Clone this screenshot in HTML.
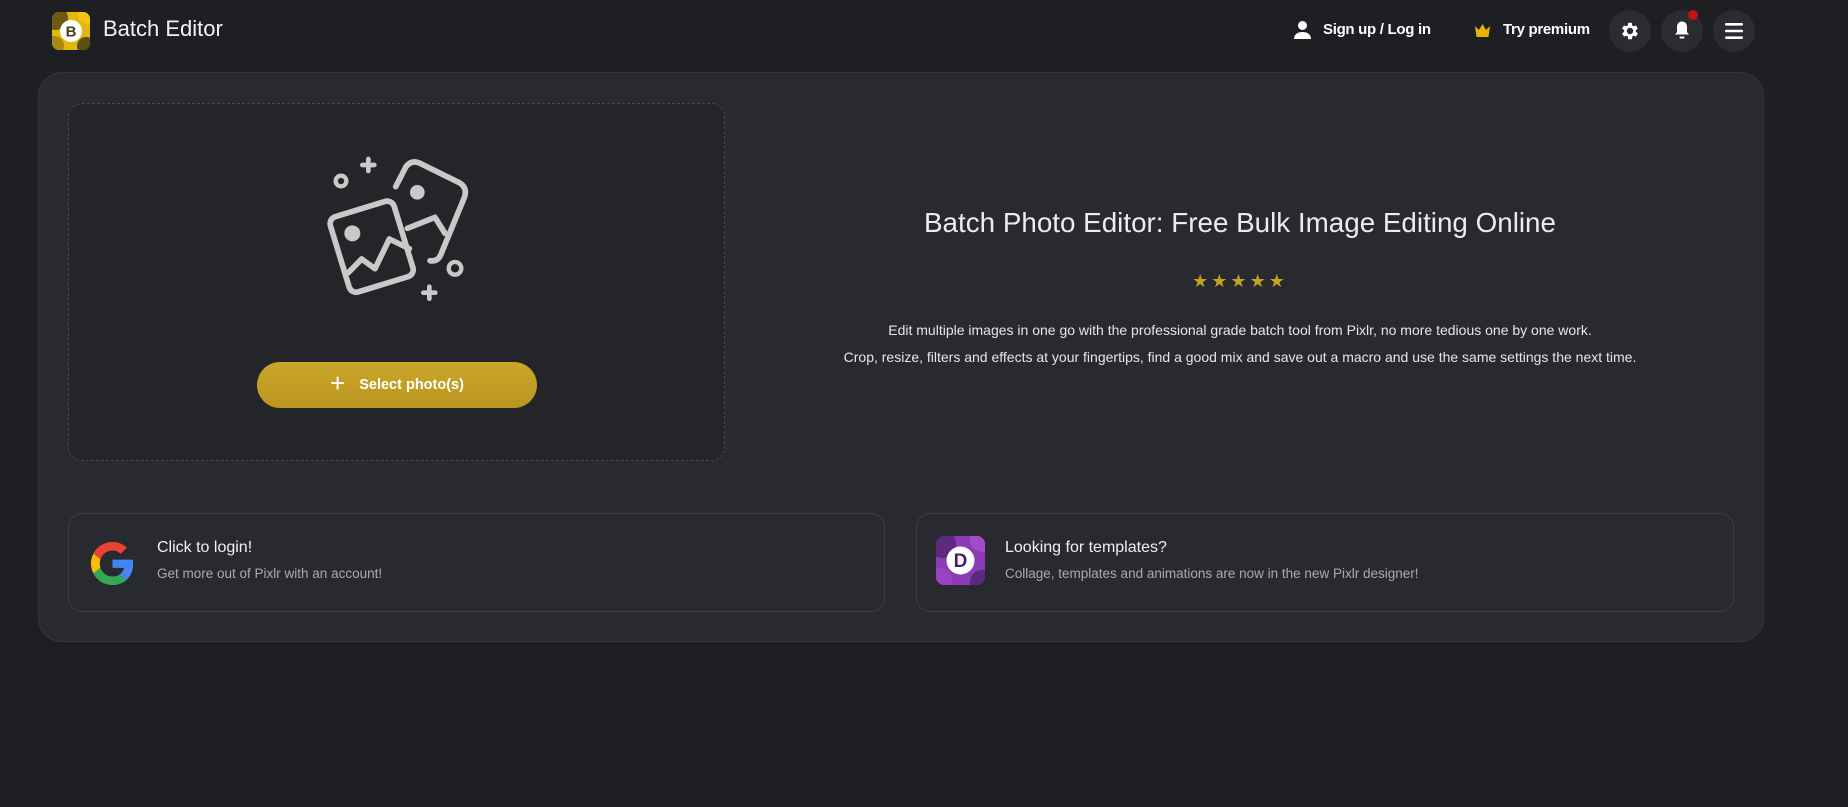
<!DOCTYPE html>
<html><head><meta charset="utf-8">
<style>
*{box-sizing:border-box;margin:0;padding:0}
html,body{width:1848px;height:807px;background:#1d1f22;overflow:hidden;font-family:"Liberation Sans",sans-serif;color:#e8e8e8}
.abs{position:absolute}
.hdr-t{left:103px;top:16px;font-size:22px;color:#f2f2f2}
.nav{top:21px;font-size:15px;font-weight:bold;color:#fff;letter-spacing:-0.3px}
.circ{width:42px;height:42px;border-radius:50%;background:#2a2c30;top:10px}
.card{left:38px;top:72px;width:1726px;height:570px;background:#282a2f;border:1px solid #33363b;border-radius:24px}
.drop{left:68px;top:103px;width:657px;height:358px;background:#232529;border:1.5px dashed #45484e;border-radius:14px}
.btn{left:257px;top:362px;width:280px;height:46px;border-radius:23px;background:linear-gradient(180deg,#c9a62b,#bb961f);color:#fff;font-weight:bold;font-size:14.5px;display:flex;align-items:center;justify-content:center}
.title{left:840px;width:800px;top:207px;text-align:center;font-size:27.8px;color:#ececec}
.stars{left:880px;width:720px;top:271px;text-align:center;font-size:18px;color:#c9a020;letter-spacing:3px}
.p{left:780px;width:920px;text-align:center;font-size:14px;color:#e6e6e6}
.bc{top:513px;height:99px;border:1px solid #3b3e44;border-radius:14px;background:#282a2f}
.bt{font-size:16px;color:#f0f0f0}
.bs{font-size:13.5px;color:#a9abaf}
</style></head><body>
<svg class="abs" style="left:52px;top:12px" width="38" height="38" viewBox="0 0 38 38">
<defs><clipPath id="lc"><rect width="38" height="38" rx="7"/></clipPath></defs>
<g clip-path="url(#lc)"><rect width="38" height="38" fill="#e3b80e"/>
<circle cx="4" cy="6" r="12" fill="#6b5a14"/><circle cx="36" cy="2" r="10" fill="#f0c516"/>
<circle cx="2" cy="34" r="10" fill="#a88a10"/><circle cx="34" cy="34" r="9" fill="#5e4e12"/></g>
<circle cx="19" cy="19" r="11" fill="#fff"/>
<text x="19" y="24.5" text-anchor="middle" font-family="Liberation Sans" font-weight="bold" font-size="15" fill="#4a3f10">B</text>
</svg>
<div class="abs hdr-t">Batch Editor</div>

<svg class="abs" style="left:1293px;top:20px" width="19" height="20" viewBox="0 0 19 20"><circle cx="9.5" cy="5.5" r="4.5" fill="#fff"/><path d="M1 19c0-5 4-7 8.5-7s8.5 2 8.5 7z" fill="#fff"/></svg>
<div class="abs nav" style="left:1323px">Sign up / Log in</div>
<svg class="abs" style="left:1474px;top:23px" width="17" height="15" viewBox="0 0 17 15"><path d="M1 3l4 4 3.5-6 3.5 6 4-4-1.5 11h-12z" fill="#e8b400"/></svg>
<div class="abs nav" style="left:1503px">Try premium</div>
<div class="abs circ" style="left:1609px"></div>
<svg class="abs" style="left:1619px;top:20px" width="22" height="22" viewBox="0 0 24 24"><path fill="#fff" d="M19.4 13a7.5 7.5 0 000-2l2.1-1.6-2-3.5-2.5 1a7 7 0 00-1.7-1L15 3h-4l-.4 2.9a7 7 0 00-1.7 1l-2.5-1-2 3.5L6.6 11a7.5 7.5 0 000 2l-2.2 1.6 2 3.5 2.5-1a7 7 0 001.7 1L11 21h4l.4-2.9a7 7 0 001.7-1l2.5 1 2-3.5zM13 15.5a3.5 3.5 0 110-7 3.5 3.5 0 010 7z" transform="translate(-1 0)"/></svg>
<div class="abs circ" style="left:1661px"></div>
<svg class="abs" style="left:1672px;top:20px" width="20" height="20" viewBox="0 0 20 20"><path d="M10 1.5c-3.3 0-5 2.5-5 5.5v5l-2 2.5h14l-2-2.5V7c0-3-1.7-5.5-5-5.5z" fill="#fff"/><rect x="7.5" y="16.5" width="5" height="2" rx="1" fill="#fff"/></svg>
<div class="abs" style="left:1688px;top:10px;width:10px;height:10px;border-radius:50%;background:#c01515"></div>
<div class="abs circ" style="left:1713px"></div>
<svg class="abs" style="left:1724px;top:21px" width="20" height="20" viewBox="0 0 20 20"><rect x="1" y="2" width="18" height="2.6" rx="1.2" fill="#fff"/><rect x="1" y="8.7" width="18" height="2.6" rx="1.2" fill="#fff"/><rect x="1" y="15.4" width="18" height="2.6" rx="1.2" fill="#fff"/></svg>

<div class="abs card"></div>
<div class="abs drop"></div>
<svg class="abs" style="left:300px;top:140px" width="200" height="170" viewBox="0 0 600 510" fill="none" stroke="#c9c9c9" stroke-width="17" stroke-linecap="round" stroke-linejoin="round">
<path d="M287,140 L318,80 Q335,58 360,70 L478,128 Q502,142 494,170 L422,345 Q412,366 390,362"/>
<path d="M322,265 L405,232 L435,280"/>
<circle cx="352" cy="157" r="22" fill="#c9c9c9" stroke="none"/>
<g transform="rotate(-17 215 320)"><rect x="115" y="202" width="200" height="236" rx="22"/></g>
<path d="M145,398 L185,357 L225,386 L268,297 L328,326"/>
<circle cx="157" cy="280" r="24" fill="#c9c9c9" stroke="none"/>
<circle cx="123" cy="123" r="16" stroke-width="13"/>
<circle cx="465" cy="385" r="19" stroke-width="13"/>
<path d="M205,57V93M187,75H223" stroke-width="14"/>
<path d="M388,440V476M370,458H406" stroke-width="14"/>
</svg>
<div class="abs btn"><span style="font-size:26px;font-weight:normal;margin-right:14px;margin-top:-3px">+</span>Select photo(s)</div>

<div class="abs title">Batch Photo Editor: Free Bulk Image Editing Online</div>
<div class="abs stars">★★★★★</div>
<div class="abs p" style="top:322px">Edit multiple images in one go with the professional grade batch tool from Pixlr, no more tedious one by one work.</div>
<div class="abs p" style="top:349px">Crop, resize, filters and effects at your fingertips, find a good mix and save out a macro and use the same settings the next time.</div>

<div class="abs bc" style="left:68px;width:817px"></div>
<svg class="abs" style="left:89px;top:540px" width="47" height="47" viewBox="0 0 48 48">
<path fill="#4285F4" d="M45.1 24.5c0-1.6-.1-3.1-.4-4.5H24v8.5h11.8c-.5 2.7-2.1 5-4.4 6.6v5.5h7.1c4.2-3.9 6.6-9.6 6.6-16.1z"/>
<path fill="#34A853" d="M24 46c5.9 0 10.9-2 14.5-5.3l-7.1-5.5c-2 1.3-4.5 2.1-7.4 2.1-5.7 0-10.6-3.900-12.3-9.1H4.4v5.7C8 41.1 15.4 46 24 46z"/>
<path fill="#FBBC05" d="M11.7 28.2c-.4-1.3-.7-2.7-.7-4.2s.3-2.9.7-4.2v-5.7H4.4C2.9 17.1 2 20.4 2 24s.9 6.9 2.4 9.9z"/>
<path fill="#EA4335" d="M24 10.7c3.2 0 6.1 1.1 8.4 3.3l6.3-6.3C34.9 4.1 29.9 2 24 2 15.4 2 8 6.9 4.4 14.1l7.3 5.7c1.7-5.2 6.6-9.1 12.3-9.1z"/>
</svg>
<div class="abs bt" style="left:157px;top:539px">Click to login!</div>
<div class="abs bs" style="left:157px;top:566px">Get more out of Pixlr with an account!</div>

<div class="abs bc" style="left:916px;width:818px"></div>
<svg class="abs" style="left:936px;top:536px" width="49" height="49" viewBox="0 0 49 49">
<defs><clipPath id="dc"><rect width="49" height="49" rx="8"/></clipPath></defs>
<g clip-path="url(#dc)"><rect width="49" height="49" fill="#8a3bb5"/>
<circle cx="6" cy="8" r="14" fill="#5d2a80"/><circle cx="46" cy="4" r="12" fill="#a24cc9"/>
<circle cx="4" cy="44" r="12" fill="#9a44c4"/><circle cx="46" cy="46" r="12" fill="#5a2a7c"/></g>
<circle cx="24.5" cy="24.5" r="14" fill="#fff"/>
<text x="24.5" y="31" text-anchor="middle" font-family="Liberation Sans" font-weight="bold" font-size="19" fill="#4a1f66">D</text>
</svg>
<div class="abs bt" style="left:1005px;top:539px">Looking for templates?</div>
<div class="abs bs" style="left:1005px;top:566px">Collage, templates and animations are now in the new Pixlr designer!</div>
</body></html>
